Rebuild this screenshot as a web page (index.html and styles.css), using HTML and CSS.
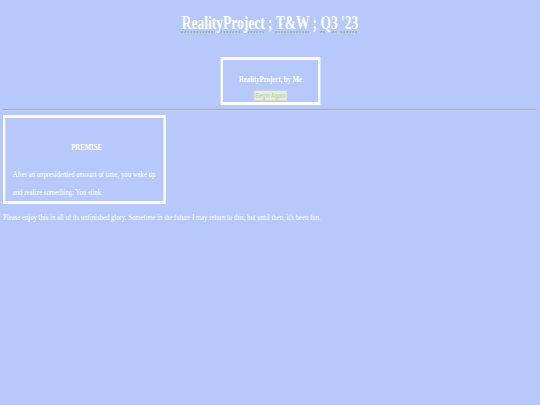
FILE: index.html
```html
<!DOCTYPE html>
<html lang="en">
<head>
    <meta charset="UTF-8">
    <meta name="viewport" content="width=device-width, initial-scale=1.0">
    <title>RealityProject</title>
    <link rel="stylesheet" href="styles.css">
</head>
<body>
    <h1 class="title narrow">
        <span class="tag">RealityProject</span> ; <span class="tag">T&amp;W</span> ; <span class="tag">Q3</span> <span class="tag">'23</span>
    </h1>

    <div class="start-card narrow">
        <p class="start-title">RealityProject, by Me</p>
        <button type="button" class="btn-restart" id="restart">Begin Again</button>
    </div>

    <hr class="divider">

    <div class="premise narrow narrow-left">
        <h4 class="premise-title">PREMISE</h4>
        <p class="premise-text">After an unpresidented amount of time, you wake up and realize something: You stink.</p>
    </div>

    <p class="note narrow narrow-left">Please enjoy this in all of its unfinished glory. Sometime in the future I may return to this, but until then, it's been fun.</p>
</body>
</html>
```

FILE: styles.css
```css
:root {
    --bg: #b7c9fa;
    --light: #ffffff;
    --btn-bg: #e6ebe4;
    --btn-text: #9edb95;
}

* {
    margin: 0;
    padding: 0;
    box-sizing: border-box;
}

body {
    background: var(--bg);
    padding: 0 3px;
    font-family: 'Liberation Serif', 'Times New Roman', serif;
    font-size: 9px;
    color: var(--light);
}

/* condensed look: blocks are squeezed sideways */
.narrow {
    transform: scaleX(0.75);
}

.narrow-left {
    transform-origin: left top;
}

.title {
    margin-top: 13px;
    font-size: 18px;
    font-weight: 700;
    text-align: center;
}

.tag {
    text-decoration: underline dotted #7fbf8c;
    text-underline-offset: 3px;
}

.start-card {
    width: 133px;
    margin: 23px auto 0;
    padding: 13px 0 1px;
    border: 3px solid var(--light);
    display: flex;
    flex-direction: column;
    align-items: center;
    gap: 5px;
}

.start-title {
    font-weight: 700;
    line-height: 12px;
}

.btn-restart {
    height: 11px;
    padding: 0 1px;
    font-family: 'Liberation Sans', Arial, sans-serif;
    font-size: 7.5px;
    line-height: 9px;
    color: var(--btn-text);
    background: var(--btn-bg);
    border: 1px solid #cdd4cc;
    border-radius: 1px;
    cursor: pointer;
}

.divider {
    margin-top: 4px;
    border: 0;
    border-top: 1px solid #9ea6c0;
    border-bottom: 1px solid #c6d1f4;
}

.premise {
    width: 217px;
    margin: 4px 0;
    padding: 20px 4px 0 10px;
    border: 3px solid var(--light);
}

.premise-title {
    font-size: 9px;
    line-height: 18px;
    text-align: center;
}

.premise-text {
    margin-top: 9px;
    line-height: 18px;
}

.note {
    line-height: 18px;
}
```
